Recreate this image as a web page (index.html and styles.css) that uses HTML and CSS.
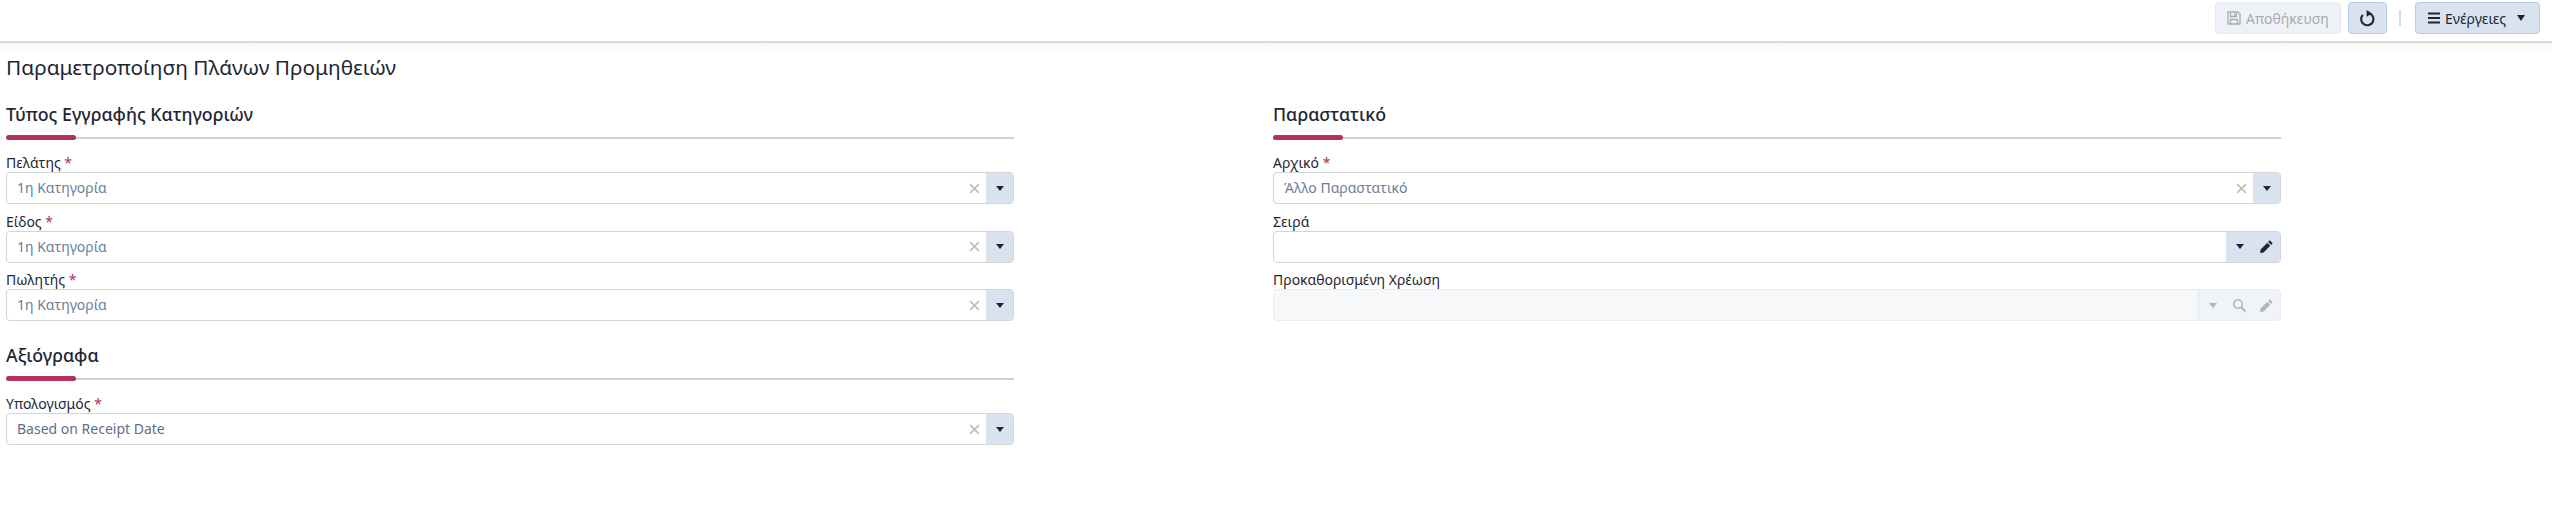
FILE: index.html
```html
<!DOCTYPE html>
<html>
<head>
    <title>Παραμετροποίηση Πλάνων Προμηθειών</title>
    <link rel="stylesheet" href="styles.css">
</head>
<body>
    <div class="toolbar">
        <button class="btn btn-disabled">
            <svg class="icon" viewBox="0 0 14 14"><path d="M1 1h10l2 2v10H1z M3.5 2v3.5h6V2 M3.5 13V8.5h7V13" fill="none" stroke="currentColor" stroke-width="1.3"/><rect x="7" y="2.4" width="1.6" height="2.4" fill="currentColor"/></svg>
            Αποθήκευση
        </button>
        <button class="btn btn-refresh">
            <svg class="icon icon-refresh" viewBox="0 0 16 16"><path d="M9.4 3A5.8 5.8 0 1 1 3.6 4.6" fill="none" stroke="#1d2733" stroke-width="2"/><path d="M7.2 0l5 3.2-5 3.2z" fill="#1d2733"/></svg>
        </button>
        <span class="toolbar-sep"></span>
        <button class="btn btn-actions">
            <svg class="icon" viewBox="0 0 14 14"><path d="M1 2.5h12M1 7h12M1 11.5h12" stroke="#1d2733" stroke-width="2"/></svg>
            Ενέργειες
            <span class="caret caret-actions"></span>
        </button>
    </div>

    <div class="page">
        <h1 class="page-title">Παραμετροποίηση Πλάνων Προμηθειών</h1>
        <div class="columns">
            <div class="column">
                <h2 class="section-title">Τύπος Εγγραφής Κατηγοριών</h2>
                <div class="section-line"></div>

                <label class="field-label">Πελάτης <span class="required">*</span></label>
                <div class="combo">
                    <span class="combo-value">1η Κατηγορία</span>
                    <svg class="clear" viewBox="0 0 10 10"><path d="M1 1l8 8M9 1l-8 8"/></svg>
                    <span class="combo-btns"><span class="combo-btn"><span class="caret"></span></span></span>
                </div>

                <label class="field-label">Είδος <span class="required">*</span></label>
                <div class="combo">
                    <span class="combo-value">1η Κατηγορία</span>
                    <svg class="clear" viewBox="0 0 10 10"><path d="M1 1l8 8M9 1l-8 8"/></svg>
                    <span class="combo-btns"><span class="combo-btn"><span class="caret"></span></span></span>
                </div>

                <label class="field-label">Πωλητής <span class="required">*</span></label>
                <div class="combo">
                    <span class="combo-value">1η Κατηγορία</span>
                    <svg class="clear" viewBox="0 0 10 10"><path d="M1 1l8 8M9 1l-8 8"/></svg>
                    <span class="combo-btns"><span class="combo-btn"><span class="caret"></span></span></span>
                </div>

                <h2 class="section-title section-second">Αξιόγραφα</h2>
                <div class="section-line"></div>

                <label class="field-label">Υπολογισμός <span class="required">*</span></label>
                <div class="combo">
                    <span class="combo-value combo-latin">Based on Receipt Date</span>
                    <svg class="clear" viewBox="0 0 10 10"><path d="M1 1l8 8M9 1l-8 8"/></svg>
                    <span class="combo-btns"><span class="combo-btn"><span class="caret"></span></span></span>
                </div>
            </div>

            <div class="column">
                <h2 class="section-title">Παραστατικό</h2>
                <div class="section-line"></div>

                <label class="field-label">Αρχικό <span class="required">*</span></label>
                <div class="combo">
                    <span class="combo-value">Άλλο Παραστατικό</span>
                    <svg class="clear" viewBox="0 0 10 10"><path d="M1 1l8 8M9 1l-8 8"/></svg>
                    <span class="combo-btns"><span class="combo-btn"><span class="caret"></span></span></span>
                </div>

                <label class="field-label">Σειρά</label>
                <div class="combo">
                    <span class="combo-value"></span>
                    <span class="combo-btns">
                        <span class="combo-btn"><span class="caret"></span></span>
                        <span class="combo-btn">
                            <svg class="tool" viewBox="0 0 14 14"><path d="M10 1.2l2.8 2.8-1.5 1.5-2.8-2.8z M7.7 3.5l2.8 2.8-6.2 6.2L1 13l.5-3.3z" fill="#1d2733"/></svg>
                        </span>
                    </span>
                </div>

                <label class="field-label">Προκαθορισμένη Χρέωση</label>
                <div class="combo combo-disabled">
                    <span class="combo-value"></span>
                    <span class="combo-btns">
                        <span class="combo-btn"><span class="caret"></span></span>
                        <span class="combo-btn">
                            <svg class="tool" viewBox="0 0 14 14"><circle cx="5.6" cy="5.6" r="4" fill="none" stroke="#b3b5b8" stroke-width="1.4"/><path d="M8.6 8.6l4 4" stroke="#b3b5b8" stroke-width="2"/></svg>
                        </span>
                        <span class="combo-btn">
                            <svg class="tool" viewBox="0 0 14 14"><path d="M10 1.2l2.8 2.8-1.5 1.5-2.8-2.8z M7.7 3.5l2.8 2.8-6.2 6.2L1 13l.5-3.3z" fill="#b3b5b8"/></svg>
                        </span>
                    </span>
                </div>
            </div>
        </div>
    </div>
</body>
</html>
```

FILE: styles.css
```css
* {
    box-sizing: border-box;
}

body {
    margin: 0;
    background-color: #fff;
    color: #1d2733;
    font-family: "Noto Sans", "Open Sans", sans-serif;
    font-size: 14px;
}

.toolbar {
    display: flex;
    align-items: center;
    justify-content: flex-end;
    height: 43px;
    padding: 2px 12px 7px 0;
    border-bottom: 2px solid #d9d9d9;
}

.btn {
    display: flex;
    align-items: center;
    justify-content: center;
    height: 32px;
    border-radius: 4px;
    font-family: inherit;
    font-size: 14px;
    color: #1d2733;
    background-color: #d9e3f0;
    border: 1px solid #b5cbe8;
    padding: 0;
}

.btn-disabled {
    width: 126px;
    gap: 5px;
    color: #a9abae;
    background-color: #eef2f8;
    border-color: #e3e9f2;
}

.btn-refresh {
    width: 39px;
    margin-left: 7px;
}

.btn-actions {
    width: 125px;
    gap: 4px;
}

.icon {
    width: 14px;
    height: 14px;
}

.icon-refresh {
    width: 17px;
    height: 17px;
}

.toolbar-sep {
    width: 2px;
    height: 16px;
    margin: 0 14px 0 12px;
    background-color: #d9dde2;
}

.caret {
    width: 0;
    height: 0;
    border-left: 4px solid transparent;
    border-right: 4px solid transparent;
    border-top: 5px solid #1d2733;
}

.caret-actions {
    margin-left: 7px;
    margin-right: 3px;
    border-left-width: 4.5px;
    border-right-width: 4.5px;
    border-top-width: 6px;
}

.page {
    padding: 9px 6px 0;
    background: linear-gradient(#f7f7f7, #fff 12px) no-repeat;
}

.page-title {
    margin: 0;
    height: 32px;
    line-height: 31px;
    font-size: 20.8px;
    font-weight: 400;
}

.columns {
    display: grid;
    grid-template-columns: 1008px 1008px;
    column-gap: 259px;
    margin-top: 19px;
}

.section-title {
    margin: 0;
    height: 26px;
    line-height: 23px;
    font-size: 17.8px;
    font-weight: 500;
}

.section-second {
    margin-top: 23px;
}

.section-line {
    position: relative;
    height: 2px;
    margin-top: 8px;
    margin-bottom: 14px;
    background-color: #d0d0d0;
}

.section-line::before {
    content: "";
    position: absolute;
    left: 0;
    top: -2px;
    width: 70px;
    height: 5px;
    border-radius: 3px;
    background-color: #b23062;
}

.field-label {
    display: block;
    height: 19px;
    line-height: 19px;
    font-size: 14px;
    color: #1d2733;
}

.required {
    color: #b23062;
}

.combo {
    display: flex;
    align-items: stretch;
    height: 32px;
    margin-bottom: 7.5px;
    border: 1px solid #d5d5d5;
    border-radius: 4px;
    overflow: hidden;
}

.combo-value {
    flex: 1;
    padding-left: 10px;
    line-height: 30px;
    font-size: 14px;
    color: #6c7f9a;
}

.combo-latin {
    color: #5f6f86;
}

.clear {
    align-self: center;
    width: 11px;
    height: 11px;
    margin-right: 6px;
    fill: none;
    stroke: #bfbfbf;
    stroke-width: 1.6;
}

.combo-btns {
    display: flex;
    background-color: #d9e3f0;
}

.combo-btn {
    display: flex;
    align-items: center;
    justify-content: center;
    width: 27px;
}

.tool {
    width: 15px;
    height: 15px;
}

.combo-disabled {
    border-color: #e9edf2;
    background-color: #f6f8fa;
}

.combo-disabled .combo-btns {
    border-left: 1px solid #e3e8f0;
    background-color: #f0f3f7;
}

.combo-disabled .caret {
    border-top-color: #b3b5b8;
}
```
